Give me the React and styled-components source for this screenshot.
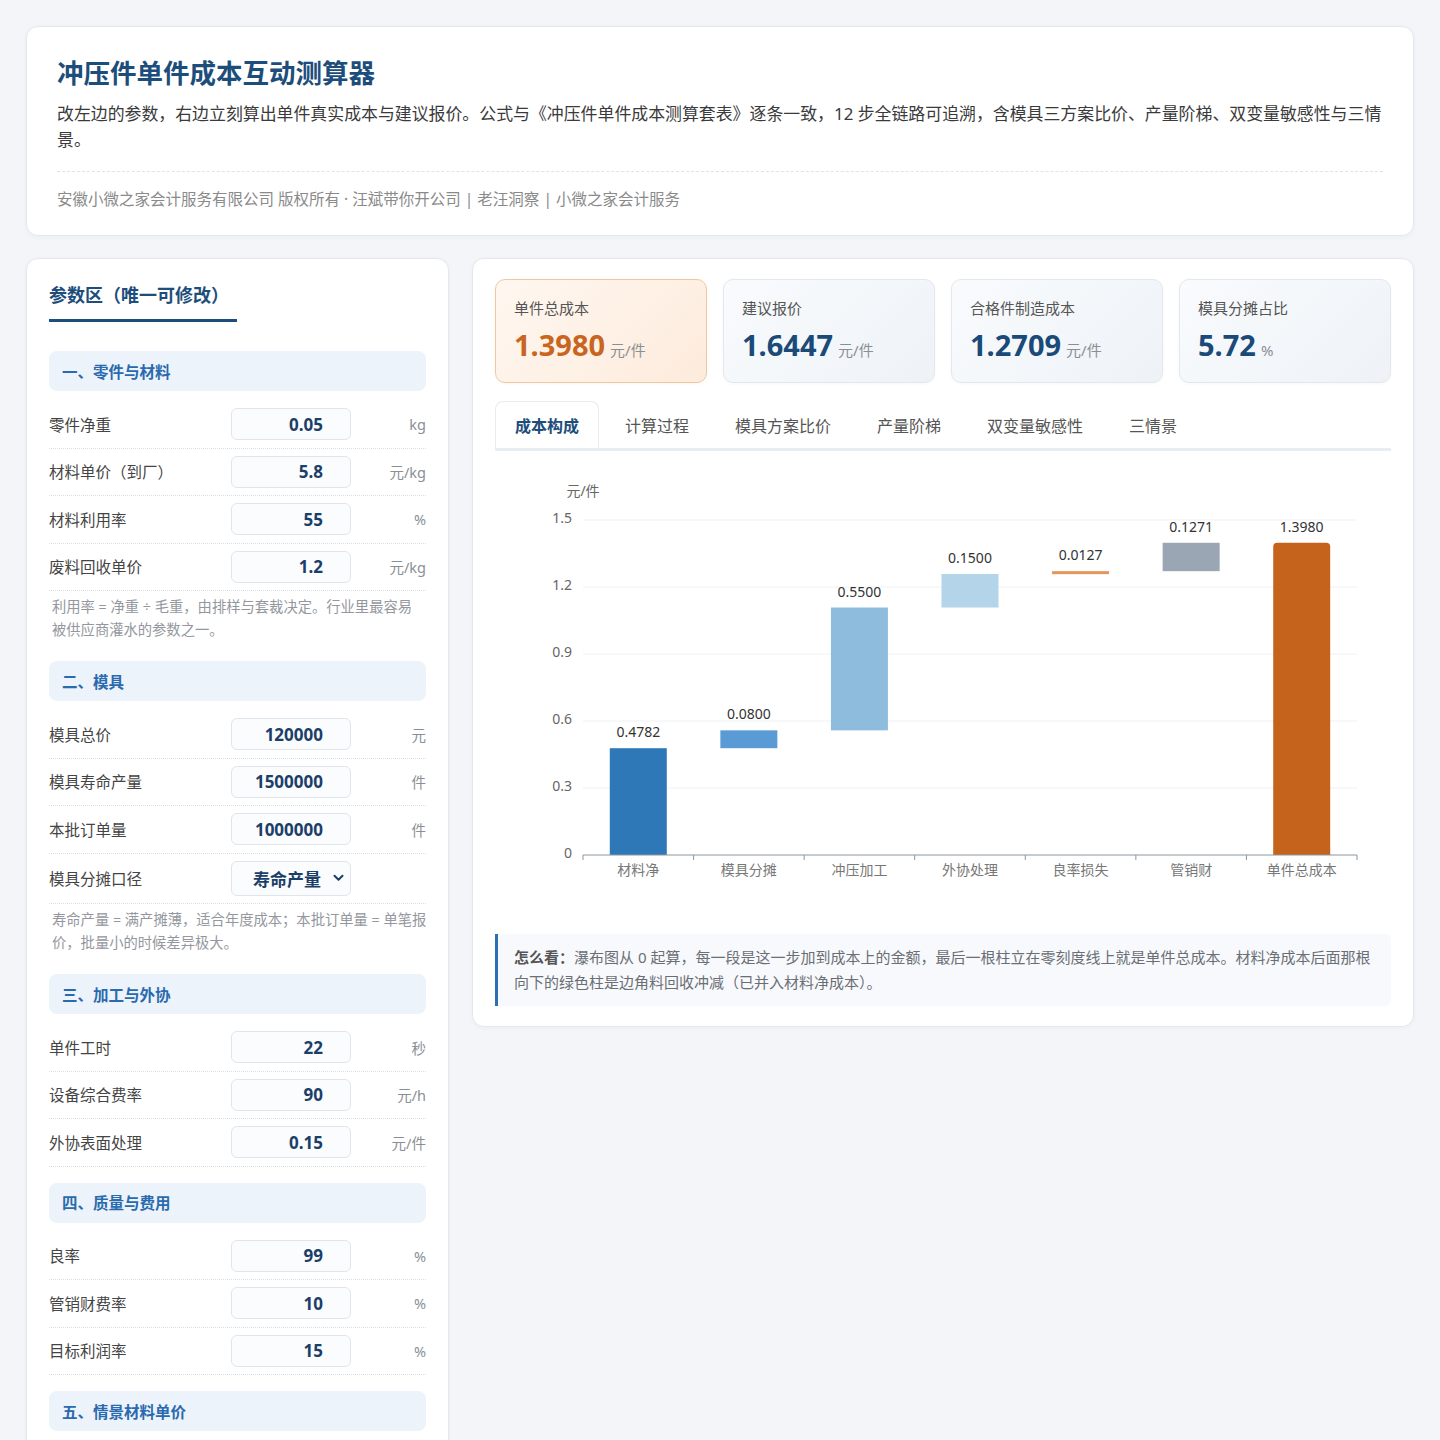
import React from "react";
import styled, { createGlobalStyle } from "styled-components";

const Global = createGlobalStyle`
  * { box-sizing: border-box; }
  body {
    margin: 0;
    background: #f3f5f9;
    font-family: "Noto Sans", "Noto Sans CJK SC", sans-serif;
    color: #333;
  }
`;

const Page = styled.div`
  padding: 26px;
  display: flex;
  flex-direction: column;
  gap: 22px;
`;

const Card = styled.section`
  background: #fff;
  border: 1px solid #e4e8ee;
  border-radius: 12px;
  box-shadow: 0 1px 4px rgba(20, 40, 70, 0.04);
`;

const Header = styled(Card)`
  padding: 28px 27px 25px 30px;
`;

const Title = styled.h1`
  margin: 0;
  font-size: 26.5px;
  line-height: 36px;
  font-weight: 700;
  color: #1d4e7b;
`;

const Desc = styled.p`
  margin: 10px 0 0;
  font-size: 16.9px;
  line-height: 26px;
  color: #3a3a3a;
`;

const Divider = styled.div`
  margin-top: 18px;
  margin-right: 3px;
  border-top: 1px dashed #e0e4ea;
`;

const Footer = styled.div`
  margin-top: 16px;
  font-size: 15.5px;
  line-height: 22px;
  color: #8a8a8a;
`;

const Main = styled.div`
  display: grid;
  grid-template-columns: 423px 1fr;
  gap: 23px;
  align-items: start;
`;

const ParamPanel = styled(Card)`
  padding: 22px 22px 24px;
`;

const PanelTitle = styled.h2`
  display: inline-block;
  margin: 0;
  font-size: 18px;
  line-height: 28px;
  font-weight: 700;
  color: #1d4e7b;
  padding: 0 8px 10px 0;
  border-bottom: 3px solid #1d4e7b;
`;

const SectionList = styled.div`
  margin-top: 29px;
  display: flex;
  flex-direction: column;
  gap: 16px;
`;

const SectionHead = styled.div`
  height: 40px;
  display: flex;
  align-items: center;
  padding: 0 13px;
  border-radius: 8px;
  background: #edf3fa;
  font-size: 15.5px;
  font-weight: 700;
  color: #2a6aae;
`;

const Rows = styled.div`
  margin-top: 10px;
`;

const Row = styled.div`
  display: grid;
  grid-template-columns: 1fr 120px 76px;
  align-items: center;
  padding: 7.25px 0;
  border-bottom: 1px dotted #d9dfe6;
`;

const Label = styled.span`
  font-size: 15.5px;
  color: #444;
`;

const NumInput = styled.input`
  width: 120px;
  height: 32px;
  margin-left: 1px;
  border: 1px solid #dfe5ec;
  border-radius: 6px;
  background: #fbfcfe;
  font-family: inherit;
  font-size: 17px;
  font-weight: 700;
  color: #1b3f68;
  text-align: right;
  padding: 0 27px 0 8px;
  outline: none;
`;

const SelectBox = styled.div`
  width: 120px;
  height: 35px;
  margin-left: 1px;
  border: 1px solid #dfe5ec;
  border-radius: 6px;
  background: #fbfcfe;
  display: flex;
  align-items: center;
  justify-content: flex-end;
  gap: 12px;
  padding-right: 6px;
  font-size: 17px;
  font-weight: 700;
  color: #1b3f68;
`;

const Unit = styled.span`
  text-align: right;
  font-size: 14.5px;
  color: #8a8f96;
`;

const Note = styled.p`
  margin: 0 0 4px;
  padding: 5px 0 0 3px;
  font-size: 14.3px;
  line-height: 22.5px;
  color: #94989e;
`;

const NoteLine = styled.span`
  display: block;
  white-space: nowrap;
`;

const ResultPanel = styled(Card)`
  padding: 20px 22px 20px;
`;

const KpiGrid = styled.div`
  display: grid;
  grid-template-columns: repeat(4, 1fr);
  gap: 16px;
`;

const Kpi = styled.div`
  height: 104px;
  border-radius: 10px;
  padding: 17px 18px;
  border: 1px solid ${(p) => (p.$hl ? "#f0c8a0" : "#e3e8ef")};
  background: ${(p) =>
    p.$hl
      ? "linear-gradient(135deg, #fff7f0 0%, #fdebdc 100%)"
      : "linear-gradient(135deg, #f9fbfd 0%, #eef2f7 100%)"};
  box-shadow: 0 1px 3px rgba(20, 40, 70, 0.04);
`;

const KpiLabel = styled.div`
  font-size: 15px;
  line-height: 22px;
  color: #555;
`;

const KpiValueRow = styled.div`
  margin-top: 8px;
  display: flex;
  align-items: baseline;
  gap: 5px;
`;

const KpiValue = styled.span`
  font-size: 29px;
  line-height: 36px;
  font-weight: 700;
  color: ${(p) => (p.$hl ? "#c8651f" : "#1a4a78")};
`;

const KpiUnit = styled.span`
  font-size: 15px;
  color: #8a8f96;
`;

const Tabs = styled.div`
  margin-top: 18px;
  display: flex;
  gap: 6px;
  border-bottom: 3px solid #e8edf3;
`;

const Tab = styled.div`
  height: 47px;
  display: flex;
  align-items: center;
  padding: 0 19px;
  font-size: 16px;
  border: 1px solid ${(p) => (p.$active ? "#e6ebf1" : "transparent")};
  border-bottom: none;
  border-radius: 8px 8px 0 0;
  background: ${(p) => (p.$active ? "#fff" : "transparent")};
  font-weight: ${(p) => (p.$active ? 700 : 400)};
  color: ${(p) => (p.$active ? "#1d4e7b" : "#555")};
`;

const ChartSvg = styled.svg`
  display: block;
  margin-top: 10px;
  width: 100%;
  height: 450px;
`;

const HowTo = styled.div`
  margin-top: 23px;
  background: #f7f9fc;
  border-left: 3px solid #2c6fb3;
  border-radius: 0 6px 6px 0;
  padding: 11px 16px;
  font-size: 15px;
  line-height: 25px;
  color: #6b6f75;
`;

const HowToLead = styled.b`
  color: #555;
`;

const sections = [
  {
    title: "一、零件与材料",
    rows: [
      { label: "零件净重", value: "0.05", unit: "kg" },
      { label: "材料单价（到厂）", value: "5.8", unit: "元/kg" },
      { label: "材料利用率", value: "55", unit: "%" },
      { label: "废料回收单价", value: "1.2", unit: "元/kg" },
    ],
    note: ["利用率 = 净重 ÷ 毛重，由排样与套裁决定。行业里最容易", "被供应商灌水的参数之一。"],
  },
  {
    title: "二、模具",
    rows: [
      { label: "模具总价", value: "120000", unit: "元" },
      { label: "模具寿命产量", value: "1500000", unit: "件" },
      { label: "本批订单量", value: "1000000", unit: "件" },
      { label: "模具分摊口径", select: "寿命产量" },
    ],
    note: ["寿命产量 = 满产摊薄，适合年度成本；本批订单量 = 单笔报", "价，批量小的时候差异极大。"],
  },
  {
    title: "三、加工与外协",
    rows: [
      { label: "单件工时", value: "22", unit: "秒" },
      { label: "设备综合费率", value: "90", unit: "元/h" },
      { label: "外协表面处理", value: "0.15", unit: "元/件" },
    ],
  },
  {
    title: "四、质量与费用",
    rows: [
      { label: "良率", value: "99", unit: "%" },
      { label: "管销财费率", value: "10", unit: "%" },
      { label: "目标利润率", value: "15", unit: "%" },
    ],
  },
  {
    title: "五、情景材料单价",
    rows: [
      { label: "乐观情景", value: "5.2", unit: "元/kg" },
      { label: "基准情景", value: "5.8", unit: "元/kg" },
      { label: "悲观情景", value: "6.6", unit: "元/kg" },
    ],
  },
];

const kpis = [
  { label: "单件总成本", value: "1.3980", unit: "元/件", hl: true },
  { label: "建议报价", value: "1.6447", unit: "元/件" },
  { label: "合格件制造成本", value: "1.2709", unit: "元/件" },
  { label: "模具分摊占比", value: "5.72", unit: "%" },
];

const tabs = ["成本构成", "计算过程", "模具方案比价", "产量阶梯", "双变量敏感性", "三情景"];

const steps = [
  { name: "材料净", from: 0, to: 0.4782, color: "#2e78b7", label: "0.4782" },
  { name: "模具分摊", from: 0.4782, to: 0.5582, color: "#5b9bd5", label: "0.0800" },
  { name: "冲压加工", from: 0.5582, to: 1.1082, color: "#8ebcdc", label: "0.5500" },
  { name: "外协处理", from: 1.1082, to: 1.2582, color: "#b4d4ea", label: "0.1500" },
  { name: "良率损失", from: 1.2582, to: 1.2709, color: "#e3955a", label: "0.0127" },
  { name: "管销财", from: 1.2709, to: 1.398, color: "#9aa6b4", label: "0.1271" },
  { name: "单件总成本", from: 0, to: 1.398, color: "#c5631c", label: "1.3980", total: true },
];

const PL = 88;
const PR = 862;
const Y0 = 394;
const PX = 67 / 0.3;
const band = (PR - PL) / steps.length;
const barW = 57;
const yOf = (v) => Y0 - v * PX;

function WaterfallChart() {
  const ticks = [0, 0.3, 0.6, 0.9, 1.2, 1.5];
  return (
    <ChartSvg viewBox="0 0 896 450">
      <text x={PL} y={35} fontSize="14" fill="#666" textAnchor="middle">元/件</text>
      {ticks.map((t) => (
        <g key={t}>
          {t > 0 && <line x1={PL} x2={PR} y1={yOf(t)} y2={yOf(t)} stroke="#eef1f5" strokeWidth="1" />}
          <text x={77} y={yOf(t) + 3} fontSize="14" fill="#666" textAnchor="end">
            {t === 0 ? "0" : t.toFixed(1)}
          </text>
        </g>
      ))}
      {steps.map((s, i) => {
        const cx = PL + band * (i + 0.5);
        const x = cx - barW / 2;
        const top = yOf(s.to);
        const bottom = yOf(s.from);
        const h = Math.max(bottom - top, 3);
        return (
          <g key={s.name}>
            {s.total ? (
              <path
                d={`M${x} ${bottom} V${top + 4} Q${x} ${top} ${x + 4} ${top} H${x + barW - 4} Q${x + barW} ${top} ${x + barW} ${top + 4} V${bottom} Z`}
                fill={s.color}
              />
            ) : (
              <rect x={x} y={top} width={barW} height={h} fill={s.color} />
            )}
            <text x={cx} y={top - 11} fontSize="14" fill="#333" textAnchor="middle">{s.label}</text>
            <text x={cx} y={414} fontSize="14" fill="#777" textAnchor="middle">{s.name}</text>
          </g>
        );
      })}
      <line x1={PL} x2={PR} y1={Y0} y2={Y0} stroke="#8c96a0" strokeWidth="1" />
      {Array.from({ length: steps.length + 1 }).map((_, i) => (
        <line key={i} x1={PL + band * i} x2={PL + band * i} y1={Y0} y2={Y0 + 5} stroke="#8c96a0" strokeWidth="1" />
      ))}
    </ChartSvg>
  );
}

function Chevron() {
  return (
    <svg width="11" height="8" viewBox="0 0 11 8" aria-hidden="true">
      <path d="M1.5 1.8 L5.5 5.8 L9.5 1.8" fill="none" stroke="#1b3f68" strokeWidth="2" strokeLinecap="round" strokeLinejoin="round" />
    </svg>
  );
}

export default function App() {
  return (
    <>
      <Global />
      <Page>
        <Header>
          <Title>冲压件单件成本互动测算器</Title>
          <Desc>
            改左边的参数，右边立刻算出单件真实成本与建议报价。公式与《冲压件单件成本测算套表》逐条一致，12 步全链路可追溯，含模具三方案比价、产量阶梯、双变量敏感性与三情景。
          </Desc>
          <Divider />
          <Footer>安徽小微之家会计服务有限公司 版权所有 · 汪斌带你开公司 | 老汪洞察 | 小微之家会计服务</Footer>
        </Header>
        <Main>
          <ParamPanel>
            <PanelTitle>参数区（唯一可修改）</PanelTitle>
            <SectionList>
              {sections.map((sec) => (
                <div key={sec.title}>
                  <SectionHead>{sec.title}</SectionHead>
                  <Rows>
                    {sec.rows.map((r) => (
                      <Row key={r.label}>
                        <Label>{r.label}</Label>
                        {r.select ? (
                          <SelectBox>
                            <span>{r.select}</span>
                            <Chevron />
                          </SelectBox>
                        ) : (
                          <NumInput type="text" readOnly value={r.value} />
                        )}
                        <Unit>{r.unit || ""}</Unit>
                      </Row>
                    ))}
                  </Rows>
                  {sec.note && (
                    <Note>
                      {sec.note.map((line) => (
                        <NoteLine key={line}>{line}</NoteLine>
                      ))}
                    </Note>
                  )}
                </div>
              ))}
            </SectionList>
          </ParamPanel>
          <ResultPanel>
            <KpiGrid>
              {kpis.map((k) => (
                <Kpi key={k.label} $hl={k.hl}>
                  <KpiLabel>{k.label}</KpiLabel>
                  <KpiValueRow>
                    <KpiValue $hl={k.hl}>{k.value}</KpiValue>
                    <KpiUnit>{k.unit}</KpiUnit>
                  </KpiValueRow>
                </Kpi>
              ))}
            </KpiGrid>
            <Tabs>
              {tabs.map((t, i) => (
                <Tab key={t} $active={i === 0}>{t}</Tab>
              ))}
            </Tabs>
            <WaterfallChart />
            <HowTo>
              <HowToLead>怎么看：</HowToLead>
              瀑布图从 0 起算，每一段是这一步加到成本上的金额，最后一根柱立在零刻度线上就是单件总成本。材料净成本后面那根向下的绿色柱是边角料回收冲减（已并入材料净成本）。
            </HowTo>
          </ResultPanel>
        </Main>
      </Page>
    </>
  );
}
